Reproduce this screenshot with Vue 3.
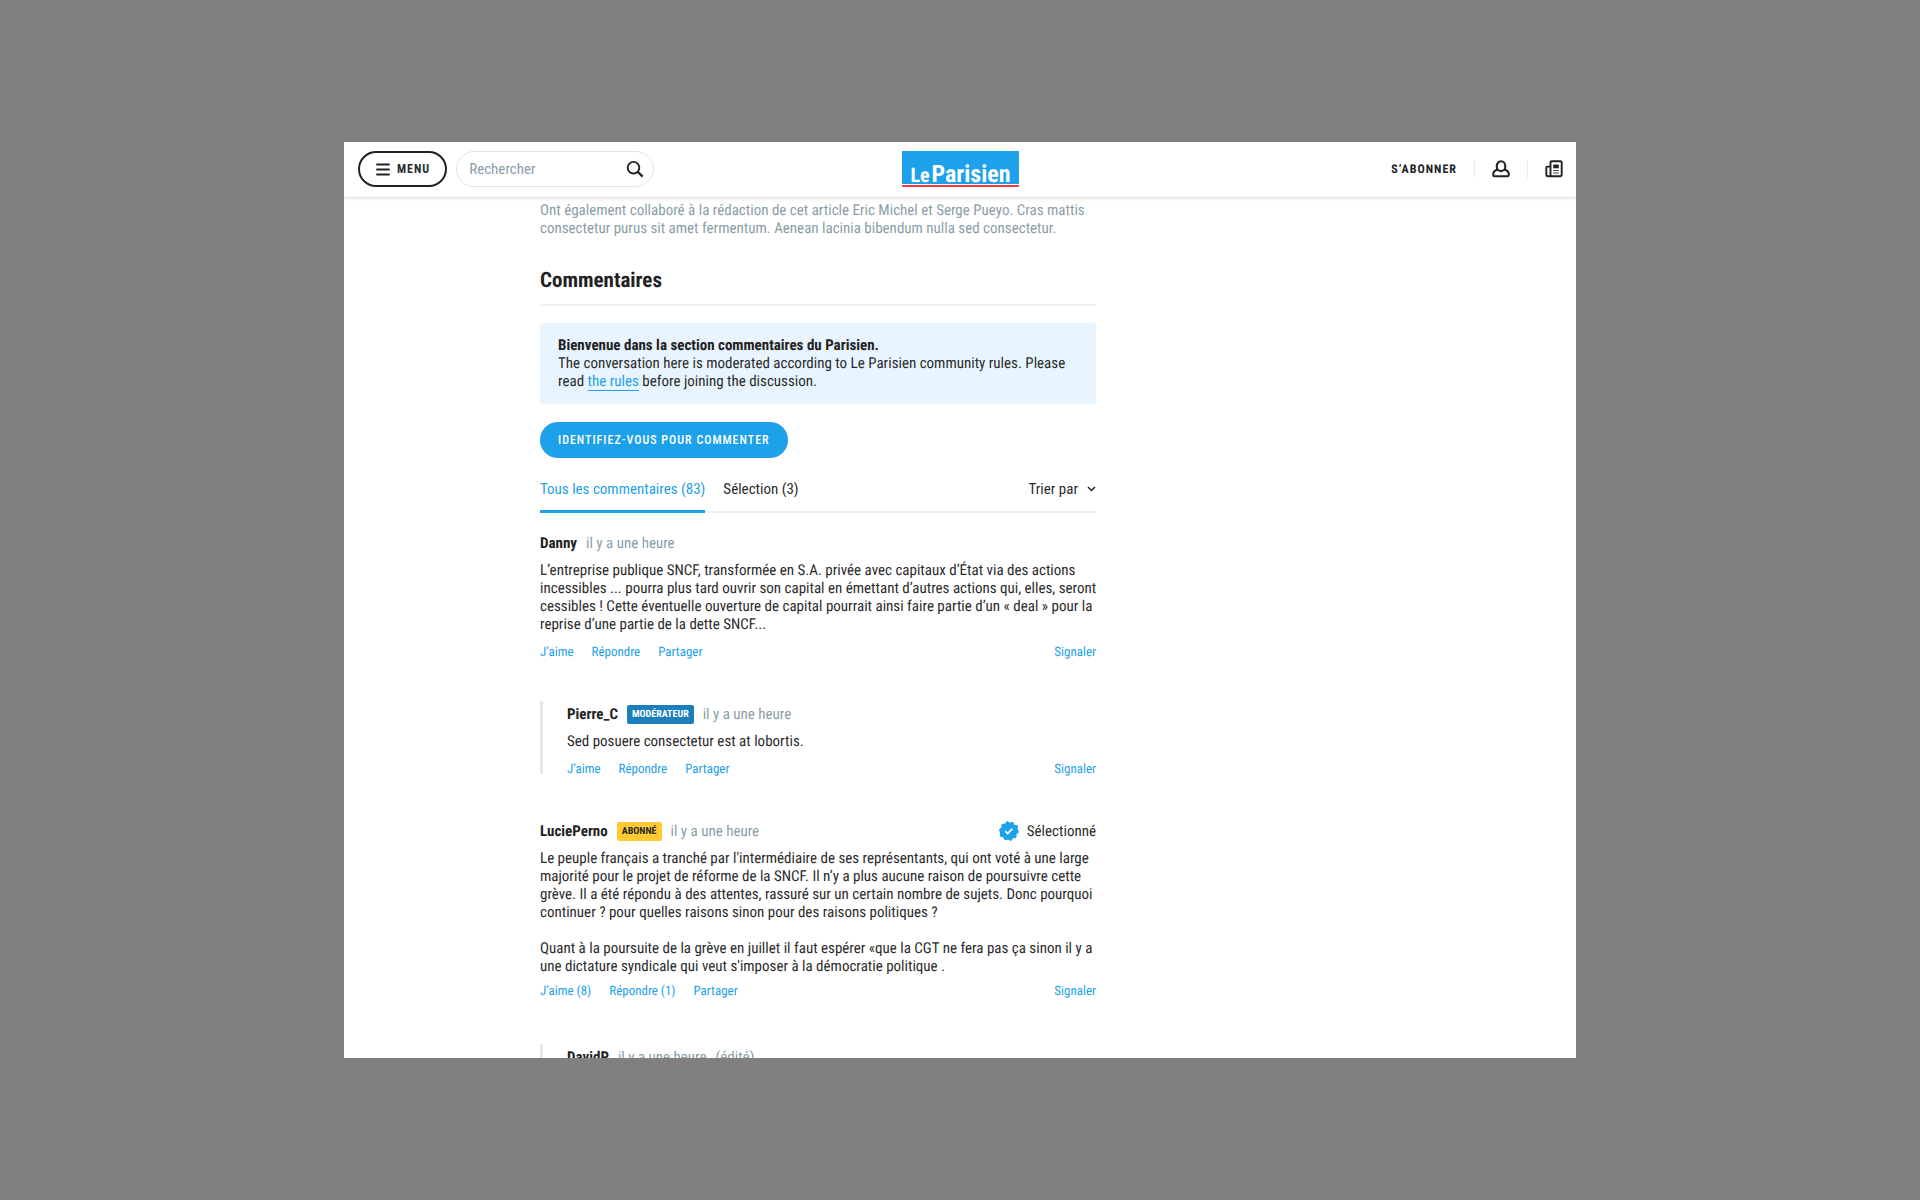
<template>
  <div class="page">
    <div class="site">
      <header class="topbar">
        <div class="topbar-left">
          <button class="menu-button" type="button">
            <svg width="14" height="13" viewBox="0 0 14 13" aria-hidden="true">
              <path d="M1 1.500h12M1 6.500h12M1 11.500h12" fill="none" stroke="#222" stroke-width="1.800" stroke-linecap="round" />
            </svg>
            <span>MENU</span>
          </button>
          <form class="search" role="search" @submit.prevent>
            <input v-model="query" type="search" placeholder="Rechercher" aria-label="Rechercher" />
            <button type="submit" aria-label="Lancer la recherche">
              <svg width="18" height="18" viewBox="0 0 18 18" aria-hidden="true">
                <circle cx="7.500" cy="7.700" r="5.800" fill="none" stroke="#222" stroke-width="1.900" />
                <path d="M11.700 11.900l5 4.700" stroke="#222" stroke-width="2.200" />
              </svg>
            </button>
          </form>
        </div>

        <a class="logo" href="#" aria-label="Le Parisien">
          <span class="logo-box"><span class="logo-small">Le</span><span class="logo-big">Parisien</span></span>
        </a>

        <nav class="topbar-right">
          <a class="subscribe" href="#">S’ABONNER</a>
          <a class="icon-link" href="#" aria-label="Mon compte">
            <svg width="18" height="18" viewBox="0 0 18 18" aria-hidden="true">
              <path d="M6.100 9.200L3.400 10.500Q1.300 11.500 1.300 13.600V15q0 1.300 1.300 1.300h12.800q1.300 0 1.300-1.300v-1.400q0-2.100-2.100-3.100L11.900 9.200" fill="none" stroke="#222" stroke-width="2.100" stroke-linejoin="round" />
              <ellipse cx="9" cy="6.200" rx="4.300" ry="4.900" fill="#fff" stroke="#222" stroke-width="2.100" />
            </svg>
          </a>
          <a class="icon-link" href="#" aria-label="Le journal">
            <svg width="18" height="18" viewBox="0 0 18 18" aria-hidden="true">
              <path d="M5.500 16.200V2.500q0-1.300 1.300-1.300h8.600q1.300 0 1.300 1.300v12q0 1.700-1.700 1.700H3q-1.700 0-1.700-1.700V7.500q0-.9.9-.9h3.300" fill="none" stroke="#222" stroke-width="1.900" stroke-linejoin="round" />
              <path d="M8.200 4.500h5.600v3.800H8.200z" fill="#222" />
              <path d="M8.200 10.500h5.600M8.200 13h5.600" stroke="#444" stroke-width="1.100" />
            </svg>
          </a>
        </nav>
      </header>

      <main class="content">
        <p class="credits">
          Ont également collaboré à la rédaction de cet article Eric Michel et Serge Pueyo. Cras mattis<br />
          consectetur purus sit amet fermentum. Aenean lacinia bibendum nulla sed consectetur.
        </p>

        <h2>Commentaires</h2>

        <div class="notice">
          <strong>Bienvenue dans la section commentaires du Parisien.</strong><br />
          The conversation here is moderated according to Le Parisien community rules. Please<br />
          read <a href="#">the rules</a> before joining the discussion.
        </div>

        <button class="login-button" type="button">IDENTIFIEZ-VOUS POUR COMMENTER</button>

        <div class="tabs">
          <button
            v-for="tab in tabs"
            :key="tab.id"
            type="button"
            class="tab"
            :class="{ active: tab.id === activeTab }"
            @click="activeTab = tab.id"
          >{{ tab.label }}</button>
          <button class="sort" type="button">
            Trier par
            <svg width="9" height="6" viewBox="0 0 9 6" aria-hidden="true">
              <path d="M1 1l3.500 3.500L8 1" fill="none" stroke="#222" stroke-width="1.500" />
            </svg>
          </button>
        </div>

        <article
          v-for="comment in comments"
          :key="comment.author"
          class="comment"
          :class="{ reply: comment.reply }"
        >
          <div class="comment-head">
            <strong>{{ comment.author }}</strong>
            <span v-if="comment.badge" class="badge" :class="comment.badgeType">{{ comment.badge }}</span>
            <span class="date">il y a une heure</span>
            <span v-if="comment.edited" class="date">(édité)</span>
            <span v-if="comment.selected" class="selected">
              <svg width="20" height="20" viewBox="0 0 20 20" aria-hidden="true">
                <path d="M8.200.700L10.800 2.200 13.900 1.500 15 4.400 18.500 5 18 8.200 19.300 11 17 13.100 16.800 16.300 13.700 16.700 11.700 19.300 9 17.900 5.900 18.600 4.700 15.800 1.300 15 1.800 11.800.6 8.900 2.900 6.800 3.200 3.600 6.300 3.200z" fill="#1da1ea" stroke="#1da1ea" stroke-width="1.200" stroke-linejoin="round" />
                <path d="M6.300 10.200l2.400 2.400 4.700-4.900" fill="none" stroke="#fff" stroke-width="1.700" />
              </svg>
              Sélectionné
            </span>
          </div>
          <p v-for="(text, i) in comment.paragraphs" :key="i" class="comment-text">{{ text }}</p>
          <div v-if="comment.actions" class="actions" :class="{ counted: comment.counted }">
            <a v-for="action in comment.actions" :key="action" href="#">{{ action }}</a>
            <a class="report" href="#">Signaler</a>
          </div>
        </article>
      </main>
    </div>
  </div>
</template>

<script setup>
import { ref } from 'vue'

const query = ref('')
const activeTab = ref('all')

const tabs = [
  { id: 'all', label: 'Tous les commentaires (83)' },
  { id: 'selection', label: 'Sélection (3)' }
]

const comments = [
  {
    author: 'Danny',
    paragraphs: [
      'L’entreprise publique SNCF, transformée en S.A. privée avec capitaux d’État via des actions\nincessibles ... pourra plus tard ouvrir son capital en émettant d’autres actions qui, elles, seront\ncessibles ! Cette éventuelle ouverture de capital pourrait ainsi faire partie d’un « deal » pour la\nreprise d’une partie de la dette SNCF...'
    ],
    actions: ['J’aime', 'Répondre', 'Partager']
  },
  {
    author: 'Pierre_C',
    badge: 'MODÉRATEUR',
    badgeType: 'moderator',
    reply: true,
    paragraphs: ['Sed posuere consectetur est at lobortis.'],
    actions: ['J’aime', 'Répondre', 'Partager']
  },
  {
    author: 'LuciePerno',
    badge: 'ABONNÉ',
    badgeType: 'subscriber',
    selected: true,
    counted: true,
    paragraphs: [
      'Le peuple français a tranché par l\'intermédiaire de ses représentants, qui ont voté à une large\nmajorité pour le projet de réforme de la SNCF. Il n’y a plus aucune raison de poursuivre cette\ngrève. Il a été répondu à des attentes, rassuré sur un certain nombre de sujets. Donc pourquoi\ncontinuer ? pour quelles raisons sinon pour des raisons politiques ?',
      'Quant à la poursuite de la grève en juillet il faut espérer «que la CGT ne fera pas ça sinon il y a\nune dictature syndicale qui veut s\'imposer à la démocratie politique .'
    ],
    actions: ['J’aime (8)', 'Répondre (1)', 'Partager']
  },
  {
    author: 'DavidP',
    reply: true,
    edited: true
  }
]
</script>

<style>
body {
  margin: 0;
  background: #808080;
}
</style>

<style scoped>
.page {
  box-sizing: border-box;
  height: 100vh;
  padding: 142px 344px;
  background: #808080;
  color: #2b2b2b;
  font-family: "Roboto Condensed", "Liberation Sans Narrow", Roboto, sans-serif;
  font-size: 15px;
  line-height: 18px;
  text-rendering: geometricPrecision;
}

.site {
  height: 100%;
  overflow: hidden;
  background: #fff;
}

button {
  padding: 0;
  border: 0;
  background: none;
  color: inherit;
  font: inherit;
  cursor: pointer;
}

a {
  color: #1da1ea;
  text-decoration: none;
}

svg {
  display: block;
}

strong,
h2 {
  color: #222;
}

.topbar {
  position: relative;
  display: grid;
  grid-template-columns: 1fr auto 1fr;
  align-items: center;
  box-sizing: border-box;
  height: 55px;
  padding: 0 13px 1px 14px;
  background: #fff;
  box-shadow: 0 1px 4px rgba(0, 0, 0, 0.16);
}

.topbar-left,
.topbar-right {
  display: flex;
  align-items: center;
}

.menu-button {
  display: flex;
  align-items: center;
  gap: 7px;
  height: 36px;
  padding: 0 15px 0 16px;
  border: 2px solid #222;
  border-radius: 18px;
  font-size: 12px;
  font-weight: bold;
  letter-spacing: 1px;
}

.search {
  display: flex;
  align-items: center;
  box-sizing: border-box;
  width: 198px;
  height: 36px;
  margin-left: 9px;
  padding: 0 9px 0 12px;
  border: 1px solid #dfe6ea;
  border-radius: 18px;
}

.search input {
  flex: 1;
  min-width: 0;
  padding: 0;
  border: 0;
  outline: 0;
  background: none;
  font: inherit;
}

.search input::placeholder {
  color: #8a9ea9;
  opacity: 1;
}

.logo {
  border-bottom: 2px solid #ee3e43;
}

.logo-box {
  display: flex;
  align-items: baseline;
  justify-content: center;
  gap: 2px;
  box-sizing: border-box;
  width: 117px;
  height: 33px;
  margin-bottom: 1px;
  padding-top: 11px;
  background: #1da1ea;
  color: #fff;
  font-weight: bold;
}

.logo-small {
  font-size: 20px;
  line-height: 20px;
}

.logo-big {
  font-size: 24px;
  line-height: 24px;
}

.topbar-right {
  justify-content: flex-end;
}

.subscribe {
  margin-right: 17px;
  color: #222;
  font-size: 12px;
  font-weight: bold;
  letter-spacing: 1px;
}

.icon-link {
  display: flex;
  align-items: center;
  height: 18px;
  padding: 0 17px;
  border-left: 1px solid #e8eaec;
}

.icon-link:last-child {
  padding-right: 0;
}

.content {
  width: 556px;
  margin-left: 196px;
  padding-top: 4px;
}

.credits {
  margin: 0;
  color: #8a9ea9;
}

h2 {
  margin: 0 0 17px;
  padding: 32px 0 11px;
  border-bottom: 2px solid #eeeff0;
  font-size: 21px;
  line-height: 24px;
}

.notice {
  padding: 13px 18px 14px;
  border-radius: 3px;
  background: #e8f5fe;
}

.notice a {
  border-bottom: 1px solid #1da1ea;
}

.login-button {
  display: block;
  height: 36px;
  margin: 18px 0 17px;
  padding: 0 18px;
  border-radius: 18px;
  background: #1da1ea;
  color: #fff;
  font-size: 12px;
  font-weight: 500;
  letter-spacing: 1px;
}

.tabs {
  display: flex;
  gap: 18px;
  height: 36px;
  margin-bottom: 20px;
  border-bottom: 2px solid #eeeff0;
}

.tab {
  height: 38px;
  padding-bottom: 8px;
  border-bottom: 3px solid transparent;
}

.tab.active {
  border-color: #1da1ea;
  color: #1da1ea;
}

.sort {
  display: flex;
  align-items: center;
  gap: 9px;
  height: 27px;
  margin-left: auto;
}

.comment {
  position: relative;
  margin-bottom: 44px;
}

.reply {
  padding-left: 27px;
}

.reply::before {
  content: "";
  position: absolute;
  top: -3px;
  bottom: 3px;
  left: 0;
  width: 3px;
  background: #e3e7ea;
}

.comment-head {
  display: flex;
  align-items: center;
  gap: 9px;
  height: 20px;
  margin-bottom: 8px;
}

.date {
  color: #8a9ea9;
}

.badge {
  padding: 1px 5px 0;
  border-radius: 2px;
  font-size: 10px;
  font-weight: bold;
}

.moderator {
  background: #1a7fba;
  color: #fff;
}

.subscriber {
  background: #ffca33;
}

.selected {
  display: flex;
  align-items: center;
  gap: 8px;
  margin-left: auto;
}

.comment-text {
  margin: 0;
  white-space: pre;
}

.comment-text + .comment-text {
  margin-top: 18px;
}

.actions {
  display: flex;
  gap: 18px;
  margin-top: 13px;
  font-size: 13px;
  line-height: 14px;
}

.actions.counted {
  margin-top: 10px;
  padding-bottom: 4px;
}

.report {
  margin-left: auto;
}
</style>
